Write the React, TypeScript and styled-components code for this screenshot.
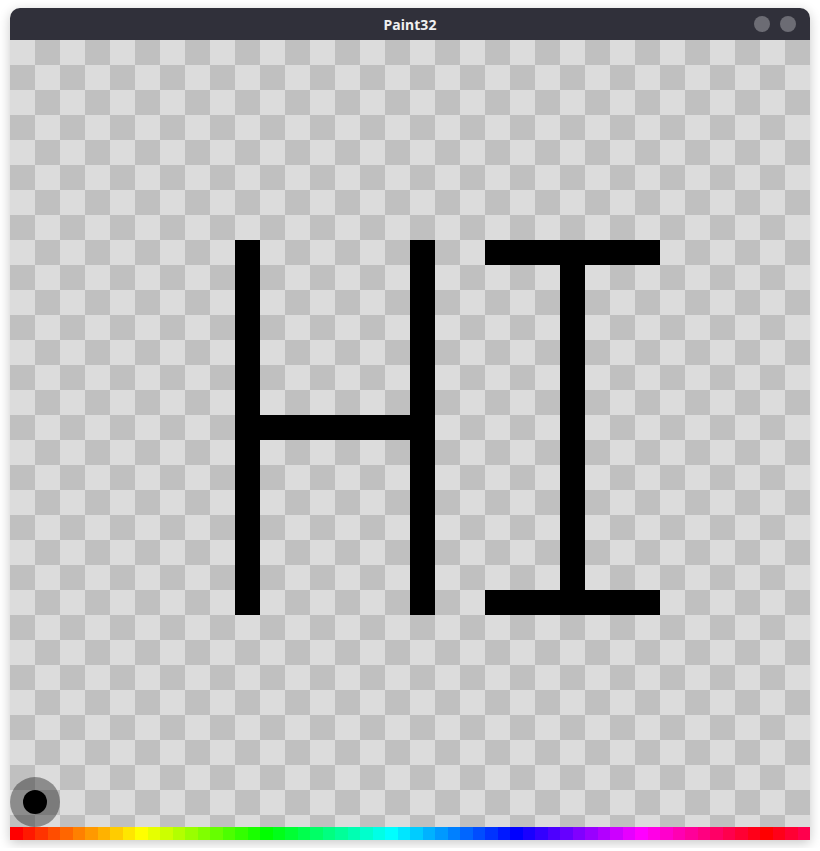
import React from "react";
import styled, { createGlobalStyle } from "styled-components";

const GlobalStyle = createGlobalStyle`
  html, body {
    margin: 0;
    padding: 0;
    background: #ffffff;
    font-family: "Noto Sans", "DejaVu Sans", sans-serif;
  }
`;

const Page = styled.div`
  padding: 8px 10px;
  width: 800px;
`;

const Window = styled.div`
  width: 800px;
  border-radius: 10px 10px 0 0;
  overflow: hidden;
  box-shadow: 0 3px 12px rgba(0, 0, 0, 0.22);
  display: flex;
  flex-direction: column;
`;

const TitleBar = styled.div`
  height: 32px;
  background-color: #30303a;
  display: flex;
  align-items: center;
  justify-content: center;
  position: relative;
`;

const Title = styled.span`
  color: #f0f0f0;
  font-size: 14px;
  font-weight: 700;
  letter-spacing: 0.1px;
`;

const Controls = styled.div`
  position: absolute;
  right: 14px;
  top: 8px;
  display: flex;
  gap: 10px;
`;

const Dot = styled.div`
  width: 16px;
  height: 16px;
  border-radius: 50%;
  background-color: #6c6c74;
`;

const Canvas = styled.div`
  position: relative;
  width: 800px;
  height: 800px;
  background: repeating-conic-gradient(#c0c0c0 0 25%, #dcdcdc 0 50%) 0 0 / 50px 50px;
`;

const Strokes = styled.svg`
  display: block;
`;

const Cursor = styled.div`
  position: absolute;
  left: 0;
  top: 737px;
  width: 50px;
  height: 50px;
  border-radius: 50%;
  background-color: rgba(0, 0, 0, 0.36);
  display: flex;
  align-items: center;
  justify-content: center;
`;

const Tip = styled.div`
  width: 24px;
  height: 24px;
  border-radius: 50%;
  background-color: #000;
`;

const Palette = styled.div`
  position: absolute;
  left: 0;
  right: 0;
  bottom: 0;
  height: 13px;
  display: flex;
`;

const Swatch = styled.div`
  flex: 1;
`;

const hues = Array.from({ length: 64 }, (_, i) => (i <= 60 ? i * 6 : 360 - (i - 60) * 6));

export default function App() {
  return (
    <>
      <GlobalStyle />
      <Page>
        <Window>
          <TitleBar>
            <Title>Paint32</Title>
            <Controls>
              <Dot />
              <Dot />
            </Controls>
          </TitleBar>
          <Canvas>
            <Strokes width="800" height="800" viewBox="0 0 800 800">
              <g fill="#000">
                {/* H */}
                <rect x="225" y="200" width="25" height="375" />
                <rect x="400" y="200" width="25" height="375" />
                <rect x="250" y="375" width="150" height="25" />
                {/* I */}
                <rect x="475" y="200" width="175" height="25" />
                <rect x="550" y="225" width="25" height="325" />
                <rect x="475" y="550" width="175" height="25" />
              </g>
            </Strokes>
            <Cursor>
              <Tip />
            </Cursor>
            <Palette>
              {hues.map((h, i) => (
                <Swatch key={i} style={{ background: `hsl(${h}, 100%, 50%)` }} />
              ))}
            </Palette>
          </Canvas>
        </Window>
      </Page>
    </>
  );
}
